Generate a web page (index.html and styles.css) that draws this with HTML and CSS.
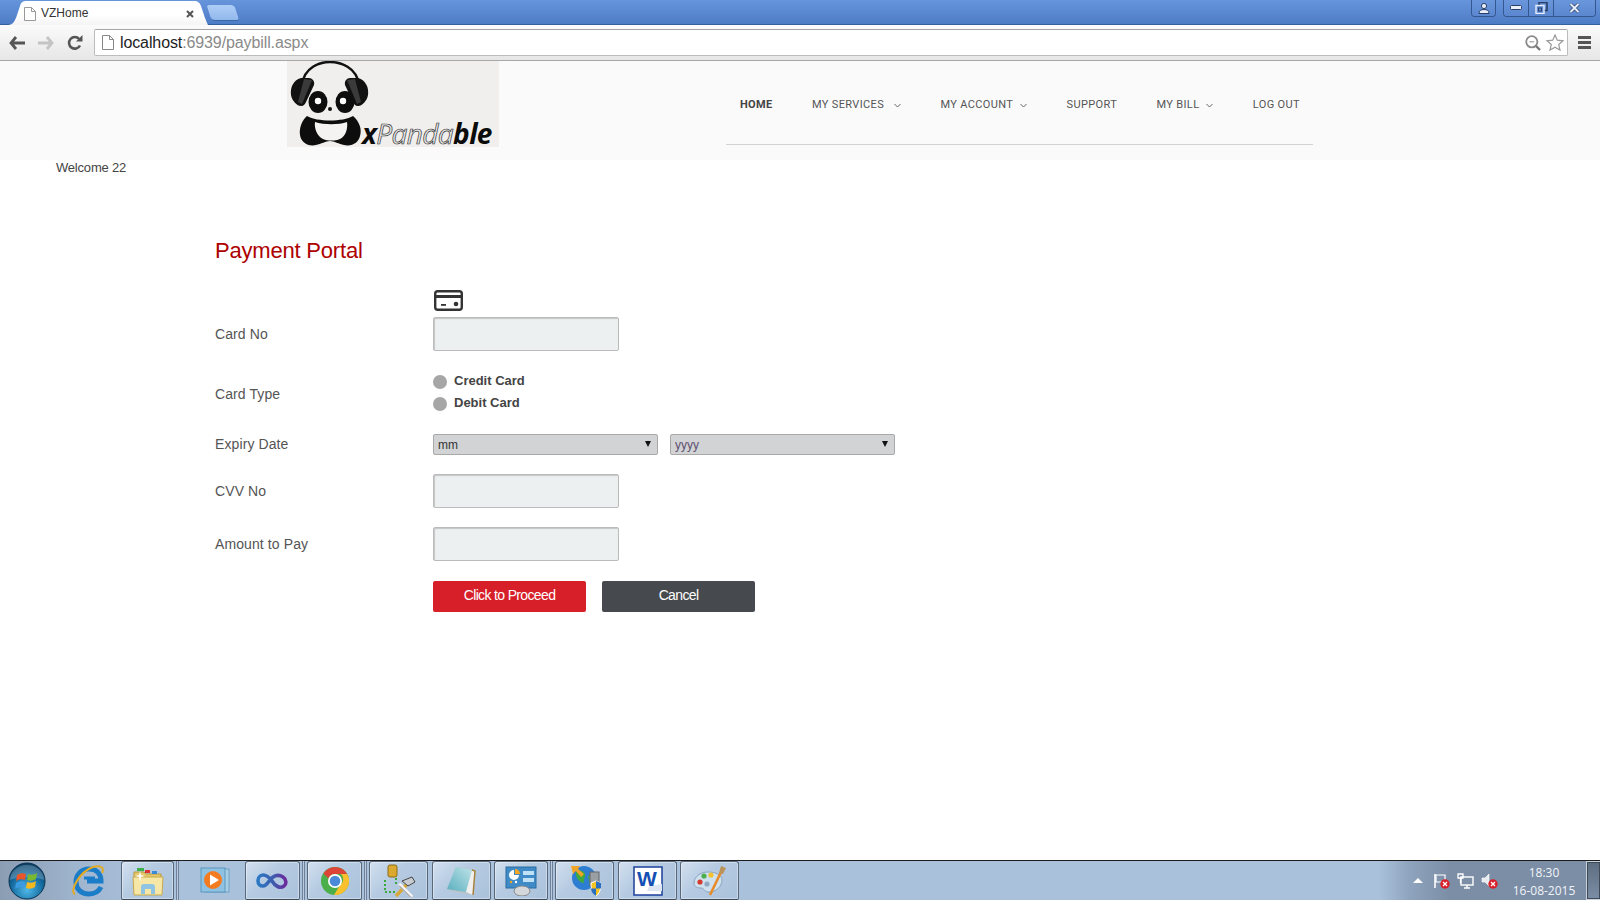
FILE: index.html
```html
<!DOCTYPE html>
<html lang="en">
<head>
<meta charset="utf-8">
<title>VZHome</title>
<link rel="stylesheet" href="styles.css">
</head>
<body>
<div class="screen">
  <div class="tabstrip">
    <div class="tab">
      <svg class="tab-doc" width="12" height="14" viewBox="0 0 12 14"><path d="M.5.5h7l4 4v9H.5z" fill="#fff" stroke="#999"/><path d="M7.5.5v4h4" fill="none" stroke="#999"/></svg>
      <span class="tab-title">VZHome</span>
      <svg class="tab-close" width="8" height="8" viewBox="0 0 8 8"><path d="M1 1l6 6M7 1L1 7" stroke="#555" stroke-width="2"/></svg>
    </div>
    <div class="newtab"></div>
    <div class="winbtn-group user-group">
      <button class="winbtn w-user"><svg width="12" height="11" viewBox="0 0 12 11"><circle cx="6" cy="3" r="2.6" fill="#e8eefa" stroke="#2a3f66"/><path d="M1 10.5c0-3 2-4 5-4s5 1 5 4z" fill="#e8eefa" stroke="#2a3f66"/></svg></button>
    </div>
    <div class="winbtn-group">
      <button class="winbtn w-min"><svg width="12" height="6" viewBox="0 0 12 6"><rect x=".5" y=".5" width="11" height="4" rx="1" fill="#e8eefa" stroke="#2a3f66"/></svg></button>
      <button class="winbtn w-max"><svg width="13" height="12" viewBox="0 0 13 12"><rect x="4" y=".5" width="8" height="8" fill="none" stroke="#2a3f66" stroke-width="1.6"/><rect x="1" y="3.5" width="8" height="8" fill="#5f8dd8" stroke="#e8eefa" stroke-width="1.4"/><rect x="3.5" y="6" width="3" height="3" fill="none" stroke="#2a3f66"/></svg></button>
      <button class="winbtn w-close"><svg width="11" height="10" viewBox="0 0 11 10"><path d="M1.5 1l8 8M9.5 1l-8 8" stroke="#2a3f66" stroke-width="3.4"/><path d="M1.5 1l8 8M9.5 1l-8 8" stroke="#e8eefa" stroke-width="2"/></svg></button>
    </div>
  </div>

  <div class="toolbar">
    <svg class="nav-icon back" width="16" height="14" viewBox="0 0 16 14"><path d="M7 1L2 7l5 6M2 7h14" fill="none" stroke="#555" stroke-width="2.8"/></svg>
    <svg class="nav-icon fwd" width="16" height="14" viewBox="0 0 16 14"><path d="M9 1l5 6-5 6M14 7H0" fill="none" stroke="#c4c4c4" stroke-width="2.8"/></svg>
    <svg class="nav-icon reload" width="16" height="16" viewBox="0 0 16 16"><path d="M13 10.5A5.8 5.8 0 1 1 12.2 4" fill="none" stroke="#555" stroke-width="2.6"/><path d="M9 6.5h6.5V0z" fill="#555"/></svg>
    <div class="omnibox">
      <svg class="omni-doc" width="12" height="15" viewBox="0 0 12 15"><path d="M.5.5h7l4 4v10H.5z" fill="#fff" stroke="#888"/><path d="M7.5.5v4h4" fill="none" stroke="#888"/></svg>
      <span class="url"><span class="url-host">localhost</span>:6939/paybill.aspx</span>
      <svg class="omni-zoom" width="16" height="16" viewBox="0 0 16 16"><circle cx="6.8" cy="6.8" r="5.6" fill="none" stroke="#8a8a8a" stroke-width="1.8"/><path d="M4.5 6.8h4.6" stroke="#8a8a8a"/><path d="M11 11l4 4" stroke="#777" stroke-width="2.4"/></svg>
      <svg class="omni-star" width="18" height="17" viewBox="0 0 18 17"><path d="M9 1l2.3 5.2 5.7.6-4.3 3.7 1.3 5.6L9 13.2l-5 2.9 1.3-5.6L1 6.800l5.700-.6z" fill="#fff" stroke="#9a9a9a" stroke-width="1.2"/></svg>
    </div>
    <div class="menu-icon"><i></i><i></i><i></i></div>
  </div>

  <div class="page">
    <header class="site-header">
      <div class="logo">
        <svg class="panda" width="92" height="86" viewBox="0 0 92 86">
          <path d="M15 24C17 6 33 1 43 1s27 5 29 23" fill="none" stroke="#111" stroke-width="2.4"/>
          <path d="M14 17c-8 2-11 10-10 17 1 6 6 11 10 11 3 0 4-2 5-4l8-17c1-4-2-7-5-7z" fill="#111"/>
          <path d="M71 17c8 2 11 10 10 17-1 6-6 11-10 11-3 0-4-2-5-4l-8-17c-1-4 2-7 5-7z" fill="#111"/>
          <path d="M17 18l8 1-10 24-4-2z" fill="#3a3a3a"/>
          <path d="M68 18l-8 1 10 24 4-2z" fill="#3a3a3a"/>
          <ellipse cx="31" cy="41" rx="9.500" ry="11" fill="#0e0e0e"/>
          <ellipse cx="58" cy="41" rx="9.500" ry="11" fill="#0e0e0e"/>
          <circle cx="31" cy="40" r="3.200" fill="#fff"/><circle cx="56" cy="40" r="3.200" fill="#fff"/>
          <circle cx="43" cy="48" r="2" fill="#111"/>
          <path d="M20 55c10 6 36 6 46 0 7 6 9 14 7 20-1 6-8 11-16 9-5-1-10-4-14-4s-9 3-14 4c-8 2-15-3-16-10-1-7 2-15 7-19z" fill="#0d0d0d"/>
          <path d="M28 61c9 3 24 3 32 0 1 6-1 14-7 17-5 2-12 2-17 0-6-3-9-11-8-17z" fill="#f4f3f1"/>
        </svg>
        <svg class="logo-word" width="134" height="40" viewBox="0 0 134 40" role="img">
          <text x="0" y="37" class="lw"><tspan class="lw-b">x</tspan><tspan class="lw-o">Panda</tspan><tspan class="lw-b">ble</tspan></text>
        </svg>
      </div>
      <nav class="nav">
        <a class="nav-item active">HOME</a>
        <a class="nav-item">MY SERVICES<svg class="chev ch-wide" width="7" height="5" viewBox="0 0 7 5"><path d="M.5 1l3 3 3-3" fill="none" stroke="#666"/></svg></a>
        <a class="nav-item">MY ACCOUNT<svg class="chev" width="7" height="5" viewBox="0 0 7 5"><path d="M.5 1l3 3 3-3" fill="none" stroke="#666"/></svg></a>
        <a class="nav-item">SUPPORT</a>
        <a class="nav-item">MY BILL<svg class="chev" width="7" height="5" viewBox="0 0 7 5"><path d="M.5 1l3 3 3-3" fill="none" stroke="#666"/></svg></a>
        <a class="nav-item">LOG OUT</a>
      </nav>
    </header>

    <main class="content">
      <p class="welcome">Welcome 22</p>
      <section class="portal">
        <h1 class="portal-title">Payment Portal</h1>
        <svg class="card-icon" width="29" height="21" viewBox="0 0 29 21"><rect x="1.200" y="1.200" width="26.600" height="18.600" rx="2.500" fill="none" stroke="#333" stroke-width="2.400"/><rect x="1" y="5" width="27" height="3" fill="#333"/><rect x="7" y="14" width="5" height="1.800" fill="#333"/><circle cx="22" cy="14" r="2.300" fill="#333"/></svg>
        <form class="form">
          <label class="lbl">Card No</label>
          <input class="field" type="text">

          <span class="lbl lbl-type">Card Type</span>
          <div class="radios">
            <label class="radio"><input type="radio" name="t"><span>Credit Card</span></label>
            <label class="radio"><input type="radio" name="t"><span>Debit Card</span></label>
          </div>

          <label class="lbl">Expiry Date</label>
          <div class="selects">
            <div class="sel"><select><option>mm</option></select></div>
            <div class="sel"><select class="year"><option>yyyy</option></select></div>
          </div>

          <label class="lbl">CVV No</label>
          <input class="field" type="text">

          <label class="lbl">Amount to Pay</label>
          <input class="field" type="text">

          <span></span>
          <div class="actions">
            <button type="button" class="btn btn-red">Click to Proceed</button>
            <button type="button" class="btn btn-dark">Cancel</button>
          </div>
        </form>
      </section>
    </main>
  </div>

  <footer class="taskbar">
    <div class="start">
      <svg width="38" height="38" viewBox="0 0 38 38">
        <defs><radialGradient id="orb" cx=".5" cy=".75" r=".75"><stop offset="0" stop-color="#4fb8e8"/><stop offset=".6" stop-color="#146a9e"/><stop offset="1" stop-color="#0b3a5e"/></radialGradient></defs>
        <circle cx="19" cy="19" r="18" fill="url(#orb)" stroke="#0d3350"/>
        <path d="M2 18a17 15 0 0 1 34 0c-8-4-26-4-34 0z" fill="#fff" opacity=".22"/>
        <path d="M9 13c3-2 6-2 9-1l-1 6c-3-1-6-1-9 1z" fill="#e8562a"/>
        <path d="M20 12c3 1 6 1 9-1l-1 6c-3 2-6 2-9 1z" fill="#7ab92f"/>
        <path d="M8 21c3-2 6-2 9-1l-1 6c-3-1-6-1-9 1z" fill="#3b9be0"/>
        <path d="M19 20c3 1 6 1 9-1l-1 6c-3 2-6 2-9 1z" fill="#f5b81f"/>
      </svg>
    </div>
    <div class="pin ie">
      <svg width="34" height="34" viewBox="0 0 34 34">
        <path d="M16 17h14c0-8-5-12-12-12C10 5 5 11 5 18s5 12 13 12c6 0 10-3 12-7" fill="none" stroke="#1b7cc8" stroke-width="5"/>
        <path d="M13 14h11" stroke="#1b7cc8" stroke-width="3"/>
        <path d="M4 30C-2 28 8 8 22 3c7-2 12 0 9 6" fill="none" stroke="#e3ab25" stroke-width="2"/>
      </svg>
    </div>
    <button class="task t-52 folder">
      <svg width="32" height="30" viewBox="0 0 32 30"><path d="M2 6h10l2 2h15v6H2z" fill="#e6c76a" stroke="#b79a3f"/><rect x="5" y="2" width="7" height="3" fill="#3cb04a"/><rect x="13" y="4" width="5" height="3" fill="#d33"/><rect x="20" y="5" width="5" height="3" fill="#3a8ad8"/><path d="M1 11h30l-1 18H2z" fill="#f7e7a6" stroke="#c5a94e"/><path d="M9 28v-7a3 3 0 0 1 3-3h8a3 3 0 0 1 3 3v7h-4v-5h-6v5z" fill="#8fc4e4"/><path d="M7 11l1 5 1-5 4-1-4-1-1-4-1 4-4 1z" fill="#fff"/></svg>
    </button>
    <div class="seps"><i></i></div>
    <div class="pin media">
      <svg width="30" height="28" viewBox="0 0 30 28"><rect x="5" y="2" width="24" height="23" fill="#a9cfe6" stroke="#6ea2c4"/><rect x="1" y="1" width="24" height="24" fill="#8fc2e2" stroke="#5a97bd"/><circle cx="13" cy="13" r="9" fill="#f47b20"/><path d="M10 7.500l9 5.500-9 5.500z" fill="#fff"/></svg>
    </div>
    <button class="task t-55 ml-6">
      <svg width="33" height="18" viewBox="0 0 33 18"><defs><linearGradient id="vs"><stop offset="0" stop-color="#2b78c4"/><stop offset=".55" stop-color="#3d5cae"/><stop offset="1" stop-color="#6d2a9e"/></linearGradient></defs><path d="M16 9c-3-4-6-6-9-6-3 0-5 3-5 6s2 5 5 5c4 0 6-6 10-9 3-2 7-2 10 0 3 2 4 7 1 9-4 3-9 0-12-5" fill="none" stroke="url(#vs)" stroke-width="3.600"/></svg>
    </button>
    <div class="seps"><i></i></div>
    <button class="task t-55 ml-1">
      <svg width="30" height="30" viewBox="0 0 30 30"><circle cx="15" cy="15" r="14" fill="#4aae4a"/><path d="M15 1a14 14 0 0 1 12.100 7H15a7 7 0 0 0-6.500 4.500L3.500 7.500A14 14 0 0 1 15 1z" fill="#dc4437"/><path d="M27.100 8A14 14 0 0 1 14 29l6-10a7 7 0 0 0 1-11z" fill="#fbc02d"/><circle cx="15" cy="15" r="7" fill="#fff"/><circle cx="15" cy="15" r="5.300" fill="#4a8ad8"/></svg>
    </button>
    <div class="seps"><i></i></div>
    <button class="task t-59 ml-1">
      <svg width="34" height="34" viewBox="0 0 34 34"><rect x="6" y="1" width="9" height="12" rx="2" fill="#dba92e" stroke="#8c6a14"/><path d="M3 16v12h11M14 14v6" fill="none" stroke="#3aa83a" stroke-width="2" stroke-dasharray="2 2"/><path d="M14 32L28 17" stroke="#d8a83a" stroke-width="3.400"/><path d="M20 17l10-4 3 5-7 4z" fill="#c8ccd2" stroke="#444"/><path d="M17 20l13 13" stroke="#f4f4f4" stroke-width="3.400"/><path d="M17 21.500l12 12" stroke="#555" stroke-width=".8"/></svg>
    </button>
    <button class="task t-59 ml-4">
      <svg width="32" height="30" viewBox="0 0 32 30"><defs><linearGradient id="np" x1="0" x2="1" y1="1" y2="0"><stop offset="0" stop-color="#58aebf"/><stop offset="1" stop-color="#bfe3e8"/></linearGradient></defs><path d="M10 1l19 3-2 25-26-5z" fill="#b8c4c4"/><path d="M10 1l16 3-6 22L1 23z" fill="url(#np)"/><path d="M20 26l6-22 3 1-2 24z" fill="#f0f0f0"/><path d="M26 4l3 1-2 24" fill="none" stroke="#a8823c" stroke-width="1.500"/></svg>
    </button>
    <button class="task t-54 ml-3">
      <svg width="32" height="30" viewBox="0 0 32 30"><rect x="1" y="1" width="30" height="21" fill="#3f8bc7" stroke="#2a6da0"/><path d="M9 4a5 5 0 1 0 5 5H9z" fill="#fff"/><path d="M10 3a5 5 0 0 1 5 5h-5z" fill="#f5a623"/><rect x="18" y="5" width="11" height="4" fill="#bfe0f5"/><rect x="18" y="12" width="11" height="4" fill="#bfe0f5"/><circle cx="6" cy="16" r="1.200" fill="#f5a623"/><circle cx="11" cy="16" r="1.200" fill="#fff"/><ellipse cx="17" cy="25" rx="8" ry="5" fill="#d5d8da" stroke="#888"/></svg>
    </button>
    <div class="seps"><i></i></div>
    <button class="task t-59 ml-1">
      <svg width="32" height="34" viewBox="0 0 32 34"><circle cx="15" cy="14" r="12" fill="#2d7dd2"/><path d="M7 8c4-3 8-1 9 2s-2 5-1 9c-4 0-9-5-8-11zM19 12l6-2 2 6-6 5z" fill="#3fa83f"/><path d="M2 2h9l-2 3 6 5-3 3-5-6-3 3z" fill="#f0a42a"/><rect x="21" y="8" width="9" height="14" fill="#9a9fa3" stroke="#666"/><path d="M22 19l5-2 5 2c0 7-2 11-5 13-3-2-5-6-5-13z" fill="#f3c420" stroke="#fff"/><path d="M27 17v7.500h5c0-2 0-4 0-5.500zM22 24.500h5V32c-3-2-5-4-5-7.500z" fill="#2a6fc0"/></svg>
    </button>
    <button class="task t-59 ml-4">
      <svg width="30" height="30" viewBox="0 0 30 30"><rect x="1" y="1" width="28" height="28" fill="#fff" stroke="#1b3f9a" stroke-width="1.500"/><path d="M16 20l13-2v7H14z" fill="#dfe6f3"/><text x="14" y="20" class="word-w">W</text></svg>
    </button>
    <button class="task t-59 ml-3">
      <svg width="34" height="32" viewBox="0 0 34 32"><path d="M15 7C7 7 1 12 1 18c0 4 4 5 7 5 3 0 3 3 6 4 8 1 15-5 15-12 0-5-6-8-14-8z" fill="#cfe0ee" stroke="#8aa6bf"/><circle cx="7" cy="17" r="2.600" fill="#d43a2e"/><circle cx="11" cy="11" r="2.600" fill="#4cae4c"/><circle cx="18" cy="10" r="2.600" fill="#f2c230"/><circle cx="14" cy="19" r="2.600" fill="#8fa9c4"/><path d="M29 5L17 30" stroke="#e88b2a" stroke-width="2.600"/><path d="M26 8l2-7 5 2-3 6z" fill="#b9935a"/></svg>
    </button>

    <div class="tray">
      <span class="tray-up"></span>
      <svg class="tray-ic" width="17" height="16" viewBox="0 0 17 16"><path d="M2 1v14" stroke="#fff" stroke-width="1.600"/><path d="M3 2h9v7H3z" fill="none" stroke="#fff" stroke-width="1.200"/><circle cx="12" cy="11" r="4.700" fill="#d9202a"/><path d="M10 9l4 4M14 9l-4 4" stroke="#fff" stroke-width="1.300"/></svg>
      <svg class="tray-ic" width="17" height="16" viewBox="0 0 17 16"><rect x="4" y="4" width="12" height="8" fill="none" stroke="#fff" stroke-width="1.400"/><path d="M7 15h6M10 12v3" stroke="#fff" stroke-width="1.400"/><path d="M1 1h5v4H1zM3.500 5v5" fill="none" stroke="#fff" stroke-width="1.300"/></svg>
      <svg class="tray-ic" width="17" height="16" viewBox="0 0 17 16"><path d="M1 5h3l4-4v12L4 9H1z" fill="#e7ecf2" stroke="#fff" stroke-width=".6"/><circle cx="12" cy="11" r="4.700" fill="#d9202a"/><path d="M10 9l4 4M14 9l-4 4" stroke="#fff" stroke-width="1.300"/></svg>
      <div class="clock"><span>18:30</span><span>16-08-2015</span></div>
      <div class="show-desktop"></div>
    </div>
  </footer>
</div>
</body>
</html>
```
FILE: styles.css
```css
* { box-sizing: border-box; }
html, body { margin: 0; padding: 0; overflow: hidden; }
body { font-family: "Liberation Sans", Arial, sans-serif; color: #444; background: #fff; }
.screen { width: 1600px; height: 900px; display: flex; flex-direction: column; }

/* browser chrome */
.tabstrip { height: 25px; flex: none; display: flex; align-items: flex-start; background: linear-gradient(#6795dc, #4d7cc6); border-bottom: 1px solid #33609f; }
.tab { width: 200px; height: 25px; margin-left: 8px; padding: 6px 14px 0 16px; display: flex; align-items: flex-start; background: linear-gradient(#fff 60%, #f4f4f4);
  clip-path: path("M0 25C5 25 7 21 9 15L12 6C13 2 15 1 19 1L186 1C190 1 192 3 193 6L196 15C198 21 200 25 200 25Z"); }
.tab-doc { margin-top: 1px; }
.tab-title { margin-left: 5px; font-size: 12px; line-height: 14px; color: #333; flex: 1; }
.tab-close { margin-top: 4px; }
.newtab { width: 28px; height: 16px; margin: 5px 0 0 1px; background: linear-gradient(#adcdf6, #92b8ec); border-radius: 3px 4px 3px 4px; transform: skewX(18deg); border-bottom: 1px solid #3a66a8; }
.winbtn-group { display: flex; height: 17px; border: 1px solid #35578f; border-top: 0; border-radius: 0 0 4px 4px; overflow: hidden; margin-left: 7px; }
.user-group { margin-left: auto; }
.winbtn { height: 16px; padding: 0; border: 0; background: linear-gradient(#6a96dc, #5b87d0); display: flex; align-items: center; justify-content: center; border-right: 1px solid #35578f; }
.winbtn:last-child { border-right: 0; }
.w-user { width: 23px; }
.w-min, .w-max { width: 25px; }
.w-close { width: 41px; }
.winbtn-group:last-child { margin-right: 4px; }

.toolbar { height: 36px; flex: none; display: flex; align-items: center; padding: 0 0 0 9px; background: linear-gradient(#fbfbfb, #e6e6e6); border-bottom: 1px solid #a8a8a8; }
.nav-icon { flex: none; }
.fwd { margin-left: 13px; }
.reload { margin-left: 13px; }
.omnibox { width: 1474px; height: 27px; margin-left: 11px; padding: 0 3px 0 7px; display: flex; align-items: center; background: #fff; border: 1px solid #bcbcbc; border-top-color: #a5a5a5; border-radius: 2px; }
.url { margin-left: 6px; font-size: 16px; letter-spacing: -.11px; color: #8a8a8a; flex: 1; }
.url-host { color: #222; }
.omni-star { margin-left: 5px; }
.menu-icon { margin-left: 10px; width: 13px; display: flex; flex-direction: column; gap: 2px; }
.menu-icon i { height: 3px; background: #555; display: block; }

/* page */
.page { flex: 1; min-height: 0; display: flex; flex-direction: column; }
.site-header { height: 99px; flex: none; display: flex; align-items: flex-start; padding-left: 287px; background: #fafafa; }
.logo { width: 212px; height: 86px; flex: none; display: flex; align-items: flex-end; background: #f0efed; }
.panda { flex: none; }
.logo-word { flex: none; margin-left: -17px; overflow: visible; }
.lw { font-family: "Open Sans", sans-serif; font-style: italic; font-size: 28px; letter-spacing: -.6px; }
.lw-b { font-weight: 700; fill: #0b0b0b; }
.lw-o { font-weight: 400; fill: #e6e6e6; stroke: #333; stroke-width: .7; }
.nav { width: 587px; height: 84px; margin-left: 227px; padding: 0 13px 0 14px; display: flex; align-items: flex-start; justify-content: space-between; border-bottom: 1px solid #d3d3d3; }
.nav-item { display: flex; align-items: center; height: 14px; margin-top: 37px; font-family: Roboto, sans-serif; font-size: 11px; line-height: 14px; letter-spacing: .35px; color: #555; white-space: nowrap; }
.nav-item.active { font-weight: 700; color: #444; }
.chev { margin-left: 7px; }
.ch-wide { margin-left: 10px; }

.content { flex: 1; min-height: 0; background: #fff; }
.welcome { margin: 0; padding-left: 56px; font-size: 13px; letter-spacing: -.2px; line-height: 15px; color: #444; }
.portal { padding: 62px 0 0 215px; }
.portal-title { margin: 0 0 25px; font-size: 22px; line-height: 28px; font-weight: 400; letter-spacing: -.2px; color: #ad0000; }
.card-icon { display: block; margin: 0 0 6px 219px; }
.form { display: grid; grid-template-columns: 218px 1fr; row-gap: 19px; align-items: center; }
.lbl { font-size: 14px; letter-spacing: .1px; color: #555; }
.lbl-type { margin-top: 3px; }
.field { width: 186px; height: 34px; padding: 0; background: #ecf0f1; border: 1px solid #bbb; border-radius: 2px; box-shadow: inset 1px 1px 1px #c6c6c6; }
.radios { display: flex; flex-direction: column; }
.radio { display: flex; align-items: center; height: 22px; font-size: 13px; font-weight: 700; color: #444; }
.radio input { appearance: none; width: 14px; height: 14px; margin: 1px 7px 0 0; border-radius: 50%; background: #a6a6a6; }
.radio span { margin-top: -2px; }
.selects { display: flex; gap: 12px; margin-top: 1px; }
.sel { position: relative; width: 225px; height: 21px; }
.sel::after { content: ""; position: absolute; right: 7px; top: 7px; border: 3px solid transparent; border-top: 6px solid #111; border-bottom: 0; }
.sel select { appearance: none; display: block; width: 100%; height: 100%; padding: 0 0 0 4px; font: 12px "Liberation Sans", Arial, sans-serif; color: #333; background: #d2d3d5; border: 1px solid #a9a9a9; border-radius: 2px; }
.sel select.year { color: #5d5070; }
.actions { display: flex; gap: 16px; margin-top: 1px; }
.btn { width: 153px; height: 31px; padding: 0 0 4px; border: 0; border-radius: 2px; font: 14px "Liberation Sans", Arial, sans-serif; letter-spacing: -.65px; color: #fff; }
.btn-red { background: #d71f2a; }
.btn-dark { background: #46494e; }

/* taskbar */
.taskbar { height: 40px; flex: none; display: flex; align-items: stretch; background: linear-gradient(90deg, #8b9db3 0, #a2b8d2 90px, #aac1dc 160px); border-top: 1px solid #1c1c1c; }
.start { width: 55px; flex: none; display: flex; align-items: center; justify-content: center; }
.start svg { margin-left: -1px; }
.pin { display: flex; align-items: center; justify-content: center; flex: none; }
.ie { width: 66px; }
.media { width: 48px; margin-left: 11px; }
.task { flex: none; height: 39px; padding: 0; margin: 0; display: flex; align-items: center; justify-content: center; background: linear-gradient(135deg, #d3e0ef 0, #b6cbe2 40%, #abc2dc 100%); border: 1px solid #58677a; border-bottom-color: #3f4a58; border-radius: 3px 3px 2px 2px; box-shadow: inset 0 0 0 1px rgba(255,255,255,.35); }
.t-52 { width: 53px; }
.t-54 { width: 54px; }
.t-55 { width: 55px; }
.t-59 { width: 59px; }
.ml-1 { margin-left: 1px; }
.ml-3 { margin-left: 3px; }
.ml-4 { margin-left: 4px; }
.ml-6 { margin-left: 6px; }
.seps { width: 6px; flex: none; display: flex; justify-content: center; }
.seps i { display: block; width: 3px; height: 100%; border: 1px solid #6f8098; border-top: 0; border-bottom: 0; background: #b9cce2; }
.word-w { font-family: "Liberation Sans", sans-serif; font-weight: 700; font-size: 21px; fill: #1450b4; text-anchor: middle; }
.tray { margin-left: auto; width: 220px; display: flex; align-items: center; padding-left: 33px; background: linear-gradient(90deg, #a9c0db 0, #8ea3bd 30px, #7c8ea6 70px); color: #fff; }
.tray-up { width: 0; height: 0; border: 5px solid transparent; border-bottom: 5px solid #fff; border-top: 0; margin-right: 10px; }
.tray-ic { margin-right: 7px; flex: none; }
.clock { flex: 1; display: flex; flex-direction: column; align-items: center; padding: 2px 3px 0 0; font-family: "Open Sans", sans-serif; font-size: 12px; line-height: 18px; color: #f1f4f8; }
.show-desktop { width: 14px; height: 100%; background: linear-gradient(#5d6d80, #7c8ea6); border: 1px solid #c8d0da; border-right: 0; box-shadow: inset 0 0 0 1px #3e4a58; }
```
